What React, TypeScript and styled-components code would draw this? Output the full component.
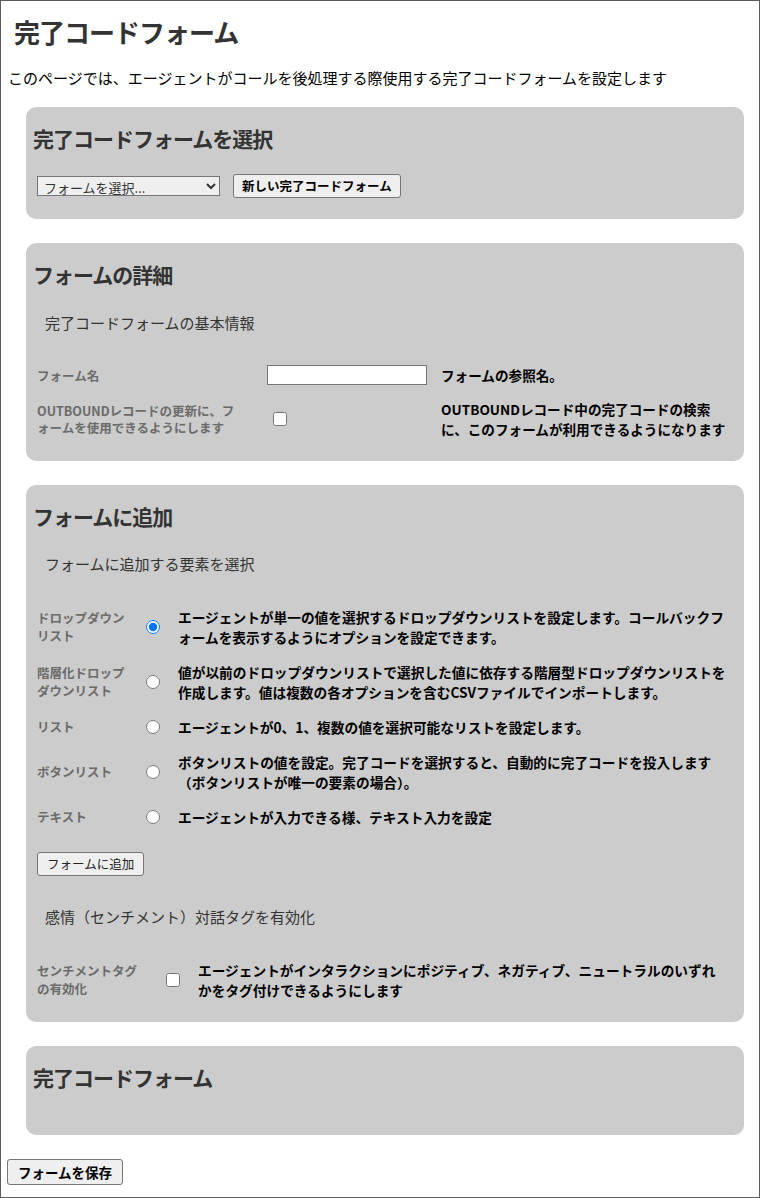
import { FC, Fragment } from "react";
import styled, { createGlobalStyle } from "styled-components";

const GlobalStyle = createGlobalStyle`
  html, body {
    margin: 0;
    padding: 0;
    background: #fff;
  }
  body {
    font-family: "Noto Sans CJK JP", "Liberation Sans", sans-serif;
    color: #000;
  }
  * {
    box-sizing: border-box;
  }
`;

type ElementType = {
  label: string;
  lines: string[];
  checked?: boolean;
};

const elementTypes: ElementType[] = [
  {
    label: "ドロップダウンリスト",
    lines: [
      "エージェントが単一の値を選択するドロップダウンリストを設定します。コールバックフ",
      "ォームを表示するようにオプションを設定できます。",
    ],
    checked: true,
  },
  {
    label: "階層化ドロップダウンリスト",
    lines: [
      "値が以前のドロップダウンリストで選択した値に依存する階層型ドロップダウンリストを",
      "作成します。値は複数の各オプションを含むCSVファイルでインポートします。",
    ],
  },
  {
    label: "リスト",
    lines: ["エージェントが0、1、複数の値を選択可能なリストを設定します。"],
  },
  {
    label: "ボタンリスト",
    lines: [
      "ボタンリストの値を設定。完了コードを選択すると、自動的に完了コードを投入します",
      "（ボタンリストが唯一の要素の場合）。",
    ],
  },
  {
    label: "テキスト",
    lines: ["エージェントが入力できる様、テキスト入力を設定"],
  },
];

const Lines: FC<{ lines: string[] }> = ({ lines }) => (
  <>
    {lines.map((line, i) => (
      <Fragment key={i}>
        {i > 0 && <br />}
        {line}
      </Fragment>
    ))}
  </>
);

const App: FC = () => {
  return (
    <>
      <GlobalStyle />
      <Frame>
        <PageTitle>完了コードフォーム</PageTitle>
        <Intro>
          このページでは、エージェントがコールを後処理する際使用する完了コードフォームを設定します
        </Intro>

        <Panels>
          <Panel $padBottom={21}>
            <PanelTitle>完了コードフォームを選択</PanelTitle>
            <Toolbar>
              <FormSelect defaultValue="">
                <option value="">フォームを選択...</option>
              </FormSelect>
              <PlainButton $bold>新しい完了コードフォーム</PlainButton>
            </Toolbar>
          </Panel>

          <Panel $padBottom={22}>
            <PanelTitle>フォームの詳細</PanelTitle>
            <SubTitle $top={26}>完了コードフォームの基本情報</SubTitle>
            <DetailsGrid>
              <FieldLabel>フォーム名</FieldLabel>
              <Control>
                <TextInput type="text" />
              </Control>
              <Help>フォームの参照名。</Help>

              <FieldLabel>
                <Lines
                  lines={[
                    "OUTBOUNDレコードの更新に、フ",
                    "ォームを使用できるようにします",
                  ]}
                />
              </FieldLabel>
              <Control>
                <CheckBox type="checkbox" $left={6} />
              </Control>
              <Help>
                <Lines
                  lines={[
                    "OUTBOUNDレコード中の完了コードの検索",
                    "に、このフォームが利用できるようになります",
                  ]}
                />
              </Help>
            </DetailsGrid>
          </Panel>

          <Panel $padBottom={22}>
            <PanelTitle>フォームに追加</PanelTitle>
            <SubTitle $top={25}>フォームに追加する要素を選択</SubTitle>
            <ChoiceGrid $labelWidth={109}>
              {elementTypes.map((item) => (
                <Fragment key={item.label}>
                  <ChoiceLabel>{item.label}</ChoiceLabel>
                  <Control>
                    <Radio
                      type="radio"
                      name="elementType"
                      defaultChecked={item.checked}
                    />
                  </Control>
                  <Description>
                    <Lines lines={item.lines} />
                  </Description>
                </Fragment>
              ))}
            </ChoiceGrid>
            <AddButton>フォームに追加</AddButton>
            <SubTitle $top={31}>感情（センチメント）対話タグを有効化</SubTitle>
            <ChoiceGrid $labelWidth={129}>
              <ChoiceLabel>センチメントタグの有効化</ChoiceLabel>
              <Control>
                <CheckBox type="checkbox" $left={0} />
              </Control>
              <Description>
                <Lines
                  lines={[
                    "エージェントがインタラクションにポジティブ、ネガティブ、ニュートラルのいずれ",
                    "かをタグ付けできるようにします",
                  ]}
                />
              </Description>
            </ChoiceGrid>
          </Panel>

          <Panel $padBottom={45}>
            <PanelTitle>完了コードフォーム</PanelTitle>
          </Panel>
        </Panels>

        <SaveButton $bold>フォームを保存</SaveButton>
      </Frame>
    </>
  );
};

export default App;

const Frame = styled.div`
  width: 760px;
  min-height: 1198px;
  border: 1px solid #5c5c5c;
  padding-bottom: 12px;
`;

const PageTitle = styled.h1`
  margin: 15px 0 0 13px;
  color: #333;
  font-size: 26px;
  line-height: 32px;
  font-weight: 700;
  letter-spacing: -1px;
`;

const Intro = styled.p`
  margin: 20px 0 0 7px;
  font-size: 15px;
  line-height: 20px;
  color: #000;
`;

const Panels = styled.div`
  display: flex;
  flex-direction: column;
  gap: 24px;
  margin: 19px 15px 0 25px;
`;

const Panel = styled.section<{ $padBottom: number }>`
  background: #cccccc;
  border-radius: 10px;
  padding: 18px 14px ${(p) => p.$padBottom}px 7px;
`;

const PanelTitle = styled.h2`
  margin: 0;
  color: #333;
  font-size: 21px;
  line-height: 26px;
  font-weight: 700;
  letter-spacing: -1px;
`;

const SubTitle = styled.h3<{ $top: number }>`
  margin: ${(p) => p.$top}px 0 0 12px;
  color: #333;
  font-size: 15px;
  line-height: 20px;
  font-weight: 400;
`;

const Toolbar = styled.div`
  display: flex;
  align-items: center;
  gap: 13px;
  margin: 23px 0 0 4px;
`;

const FormSelect = styled.select`
  width: 183px;
  height: 20px;
  padding: 0 2px;
  border: 1px solid #767676;
  border-radius: 0;
  background: #efefef;
  color: #333;
  font-family: "Noto Sans CJK JP", sans-serif;
  font-size: 13px;
`;

const PlainButton = styled.button<{ $bold?: boolean }>`
  height: 24px;
  padding: 0 8px;
  border: 1px solid #767676;
  border-radius: 3px;
  background: #efefef;
  color: #000;
  font-family: "Noto Sans CJK JP", sans-serif;
  font-size: 12.5px;
  line-height: 20px;
  font-weight: ${(p) => (p.$bold ? 700 : 400)};
`;

const AddButton = styled(PlainButton)`
  display: block;
  margin: 25px 0 0 4px;
  padding: 0 9px;
  color: #222;
`;

const SaveButton = styled(PlainButton)`
  display: block;
  height: 26px;
  margin: 24px 0 0 6px;
  padding: 0 10px;
  font-size: 13.5px;
`;

const DetailsGrid = styled.div`
  display: grid;
  grid-template-columns: 230px 174px 1fr;
  row-gap: 14px;
  align-items: center;
  margin: 32px 0 0 4px;
`;

const ChoiceGrid = styled.div<{ $labelWidth: number }>`
  display: grid;
  grid-template-columns: ${(p) => p.$labelWidth}px 32px 1fr;
  row-gap: 15px;
  align-items: center;
  margin: 33px 0 0 4px;
`;

const FieldLabel = styled.div`
  padding-right: 12px;
  color: #6b6b6b;
  font-size: 12.5px;
  line-height: 17px;
  font-weight: 700;
`;

const ChoiceLabel = styled(FieldLabel)`
  padding-right: 20px;
  line-height: 18px;
`;

const Control = styled.div`
  display: flex;
  align-items: center;
`;

const Help = styled.div`
  color: #000;
  font-size: 13.6px;
  line-height: 20px;
  font-weight: 700;
`;

const Description = styled(Help)`
  font-size: 13.7px;
`;

const TextInput = styled.input`
  width: 160px;
  height: 20px;
  margin: 0;
  padding: 0 3px;
  border: 1px solid #767676;
  background: #fff;
`;

const CheckBox = styled.input<{ $left: number }>`
  width: 14px;
  height: 14px;
  margin: 0 0 0 ${(p) => p.$left}px;
`;

const Radio = styled.input`
  width: 14px;
  height: 14px;
  margin: 0;
`;
